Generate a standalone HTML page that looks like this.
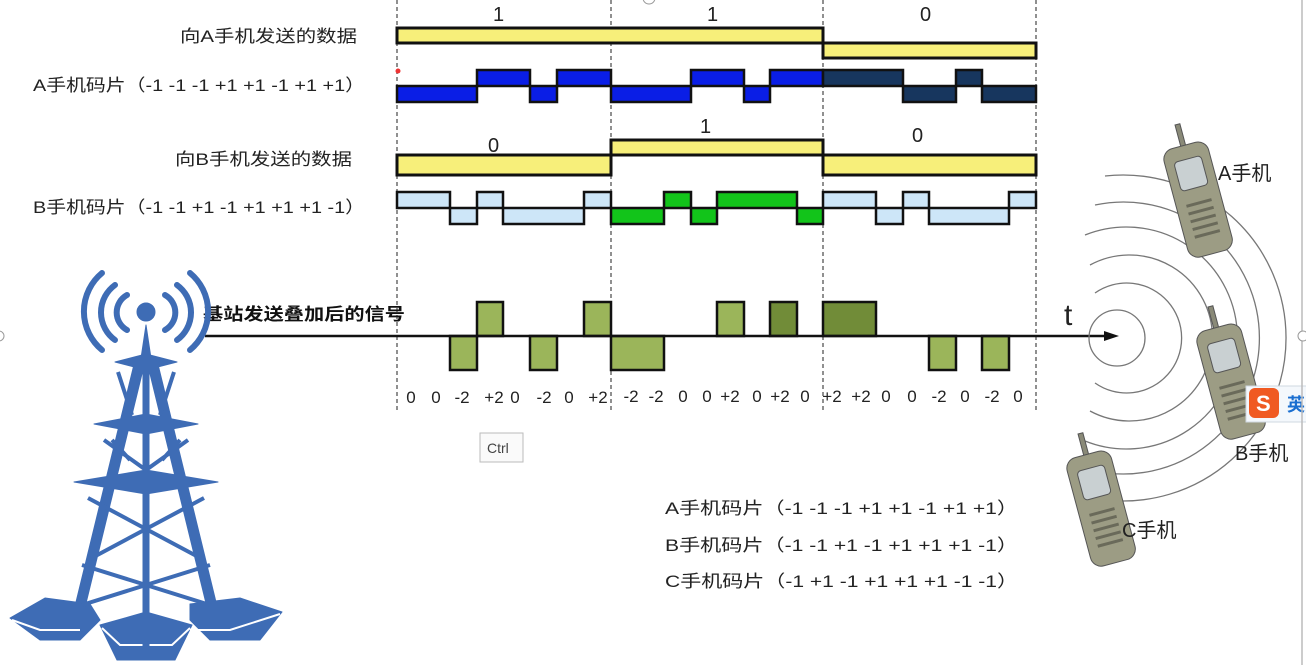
<!DOCTYPE html>
<html><head><meta charset="utf-8"><style>
html,body{margin:0;padding:0;background:#fff;}
svg{display:block}
text{font-family:"Liberation Sans","Noto Sans CJK SC",sans-serif;fill:#222;}
</style></head><body>
<svg width="1306" height="665" viewBox="0 0 1306 665" xmlns="http://www.w3.org/2000/svg">
<g stroke="#555" stroke-width="1.3" stroke-dasharray="4,3">
<line x1="397" y1="0" x2="397" y2="410"/>
<line x1="611" y1="0" x2="611" y2="410"/>
<line x1="823" y1="0" x2="823" y2="410"/>
<line x1="1036" y1="0" x2="1036" y2="410"/>
</g>
<g font-size="17">
<text x="180" y="42" textLength="177" lengthAdjust="spacingAndGlyphs">向A手机发送的数据</text>
<text x="33" y="91" textLength="332" lengthAdjust="spacingAndGlyphs">A手机码片（-1 -1 -1 +1 +1 -1 +1 +1）</text>
<text x="175" y="165" textLength="177" lengthAdjust="spacingAndGlyphs">向B手机发送的数据</text>
<text x="33" y="213" textLength="332" lengthAdjust="spacingAndGlyphs">B手机码片（-1 -1 +1 -1 +1 +1 +1 -1）</text>
</g>
<text x="203" y="320" font-size="17" font-weight="bold" textLength="202" lengthAdjust="spacingAndGlyphs" style="fill:#111">基站发送叠加后的信号</text>
<circle cx="398" cy="71" r="2.5" fill="#e33"/>
<g stroke="#111" stroke-width="3" fill="#f7ef7a">
<rect x="397" y="28" width="426" height="15"/>
<rect x="823" y="43" width="213" height="15"/>
</g>
<g font-size="20"><text x="493" y="21">1</text><text x="707" y="21">1</text><text x="920" y="21">0</text></g>
<g stroke="#111" stroke-width="2.5">
<g fill="#0a1ee6">
<rect x="397" y="86" width="80" height="16"/><rect x="477" y="70" width="53" height="16"/><rect x="530" y="86" width="27" height="16"/><rect x="557" y="70" width="54" height="16"/>
<rect x="611" y="86" width="80" height="16"/><rect x="691" y="70" width="53" height="16"/><rect x="744" y="86" width="26" height="16"/><rect x="770" y="70" width="53" height="16"/>
</g>
<g fill="#17365e">
<rect x="823" y="70" width="80" height="16"/><rect x="903" y="86" width="53" height="16"/><rect x="956" y="70" width="26" height="16"/><rect x="982" y="86" width="54" height="16"/>
</g>
</g>
<g stroke="#111" stroke-width="3" fill="#f7ef7a">
<rect x="397" y="155" width="214" height="20"/>
<rect x="611" y="140" width="212" height="15"/>
<rect x="823" y="155" width="213" height="20"/>
</g>
<g font-size="20"><text x="488" y="152">0</text><text x="700" y="133">1</text><text x="912" y="142">0</text></g>
<g stroke="#111" stroke-width="2.5">
<g fill="#cde6f8">
<rect x="397" y="192" width="53" height="16"/><rect x="450" y="208" width="27" height="16"/><rect x="477" y="192" width="26" height="16"/><rect x="503" y="208" width="81" height="16"/><rect x="584" y="192" width="27" height="16"/>
<rect x="823" y="192" width="53" height="16"/><rect x="876" y="208" width="27" height="16"/><rect x="903" y="192" width="26" height="16"/><rect x="929" y="208" width="80" height="16"/><rect x="1009" y="192" width="27" height="16"/>
</g>
<g fill="#12c41a">
<rect x="611" y="208" width="53" height="16"/><rect x="664" y="192" width="27" height="16"/><rect x="691" y="208" width="26" height="16"/><rect x="717" y="192" width="80" height="16"/><rect x="797" y="208" width="26" height="16"/>
</g>
</g>
<g stroke="#111" stroke-width="2.5" fill="#9bb55a">
<rect x="450" y="336" width="27" height="34"/><rect x="477" y="302" width="26" height="34"/><rect x="530" y="336" width="27" height="34"/><rect x="584" y="302" width="27" height="34"/>
<rect x="611" y="336" width="53" height="34"/><rect x="717" y="302" width="27" height="34"/><rect x="770" y="302" width="27" height="34" fill="#718c38"/>
<rect x="823" y="302" width="53" height="34" fill="#718c38"/><rect x="929" y="336" width="27" height="34"/><rect x="982" y="336" width="27" height="34"/>
</g>
<line x1="205" y1="336" x2="1108" y2="336" stroke="#111" stroke-width="2.5"/>
<polygon points="1119,336 1104,331 1104,341" fill="#111"/>
<text x="1064" y="325" font-size="30">t</text>
<g font-size="17" text-anchor="middle">
<text x="411" y="403">0</text><text x="436" y="403">0</text><text x="462" y="403">-2</text><text x="494" y="403">+2</text><text x="515" y="403">0</text><text x="544" y="403">-2</text><text x="569" y="403">0</text><text x="598" y="403">+2</text>
<text x="631" y="402">-2</text><text x="656" y="402">-2</text><text x="683" y="402">0</text><text x="707" y="402">0</text><text x="730" y="402">+2</text><text x="757" y="402">0</text><text x="780" y="402">+2</text><text x="805" y="402">0</text>
<text x="832" y="402">+2</text><text x="861" y="402">+2</text><text x="886" y="402">0</text><text x="912" y="402">0</text><text x="939" y="402">-2</text><text x="965" y="402">0</text><text x="992" y="402">-2</text><text x="1018" y="402">0</text>
</g>
<rect x="480" y="433" width="43" height="29" fill="#fafafa" stroke="#bbb"/>
<text x="487" y="453" font-size="14" style="fill:#444">Ctrl</text>
<g font-size="17">
<text x="665" y="514" textLength="353" lengthAdjust="spacingAndGlyphs">A手机码片（-1 -1 -1 +1 +1 -1 +1 +1）</text>
<text x="665" y="551" textLength="353" lengthAdjust="spacingAndGlyphs">B手机码片（-1 -1 +1 -1 +1 +1 +1 -1）</text>
<text x="665" y="587" textLength="353" lengthAdjust="spacingAndGlyphs">C手机码片（-1 +1 -1 +1 +1 +1 -1 -1）</text>
</g>
<g fill="none" stroke="#777" stroke-width="1.3">
<circle cx="1117" cy="338" r="28"/>
<path d="M1095,293 A55,55 0 1 1 1095,383"/>
<path d="M1090,265 A83,83 0 1 1 1090,411"/>
<path d="M1085,235 A111,111 0 1 1 1085,441"/>
<path d="M1095,205 A136,136 0 1 1 1095,471"/>
<path d="M1105,176 A163,163 0 1 1 1105,500"/>
</g>
<g transform="translate(1195,188) rotate(-15)">
<rect x="-3" y="-66" width="5" height="26" fill="#8a8a78" stroke="#555"/>
<rect x="-23" y="-44" width="46" height="112" rx="11" fill="#9c9c84" stroke="#555"/>
<rect x="-14" y="-30" width="28" height="30" rx="4" fill="#c9d0d2" stroke="#555"/>
<g fill="#6a6a5a"><rect x="-13" y="14" width="26" height="3"/><rect x="-13" y="22" width="26" height="3"/><rect x="-13" y="30" width="26" height="3"/><rect x="-13" y="38" width="26" height="3"/><rect x="-13" y="46" width="26" height="3"/></g>
</g>
<g transform="translate(1228,370) rotate(-15)">
<rect x="-3" y="-66" width="5" height="26" fill="#8a8a78" stroke="#555"/>
<rect x="-23" y="-44" width="46" height="112" rx="11" fill="#9c9c84" stroke="#555"/>
<rect x="-14" y="-30" width="28" height="30" rx="4" fill="#c9d0d2" stroke="#555"/>
<g fill="#6a6a5a"><rect x="-13" y="14" width="26" height="3"/><rect x="-13" y="22" width="26" height="3"/><rect x="-13" y="30" width="26" height="3"/><rect x="-13" y="38" width="26" height="3"/><rect x="-13" y="46" width="26" height="3"/></g>
</g>
<g transform="translate(1098,497) rotate(-15)">
<rect x="-3" y="-66" width="5" height="26" fill="#8a8a78" stroke="#555"/>
<rect x="-23" y="-44" width="46" height="112" rx="11" fill="#9c9c84" stroke="#555"/>
<rect x="-14" y="-30" width="28" height="30" rx="4" fill="#c9d0d2" stroke="#555"/>
<g fill="#6a6a5a"><rect x="-13" y="14" width="26" height="3"/><rect x="-13" y="22" width="26" height="3"/><rect x="-13" y="30" width="26" height="3"/><rect x="-13" y="38" width="26" height="3"/><rect x="-13" y="46" width="26" height="3"/></g>
</g>
<g font-size="20">
<text x="1218" y="180">A手机</text>
<text x="1235" y="460">B手机</text>
<text x="1122" y="537">C手机</text>
</g>
<rect x="1246" y="386" width="62" height="36" fill="#f4f8fc" stroke="#cfd8e0"/>
<rect x="1249" y="388" width="30" height="30" rx="6" fill="#f05a22"/>
<text x="1256" y="411" font-size="22" font-weight="bold" style="fill:#fff">S</text>
<text x="1287" y="411" font-size="18" font-weight="bold" style="fill:#1b6fd0">英</text>
<line x1="1302" y1="0" x2="1302" y2="665" stroke="#bbb" stroke-width="1.5"/>
<circle cx="649" cy="-2" r="6" fill="#fff" stroke="#999"/>
<circle cx="1303" cy="336" r="5" fill="#fff" stroke="#999"/>
<circle cx="-1" cy="336" r="5" fill="#fff" stroke="#999"/>
<g fill="none" stroke="#3e6cb5" stroke-width="6" stroke-linecap="round">
<path d="M127,295 A20,20 0 0 0 127,330"/><path d="M165,295 A20,20 0 0 1 165,330"/>
<path d="M115,285 A34,34 0 0 0 115,340"/><path d="M177,285 A34,34 0 0 1 177,340"/>
<path d="M102,273 A50,50 0 0 0 102,350"/><path d="M190,273 A50,50 0 0 1 190,350"/>
</g>
<g fill="#3e6cb5" stroke="#3e6cb5" stroke-linejoin="round">
<circle cx="146" cy="312" r="9"/>
<polygon points="146,325 152,365 140,365"/>
<polygon points="115,362 146,354 177,362 146,370"/>
<polygon points="94,424 146,414 198,424 146,434"/>
<polygon points="74,482 146,470 218,482 146,494"/>
<polygon points="10,618 45,598 90,604 100,620 80,640 40,640"/>
<polygon points="190,604 240,598 282,612 260,640 210,640 190,620"/>
<polygon points="100,625 146,612 192,625 175,660 117,660"/>
</g>
<g stroke="#fff" stroke-width="2" fill="none">
<path d="M12,620 L40,630 L80,630 M190,630 L230,630 L280,614 M102,628 L120,645 L172,645 L190,628"/>
</g>
<g stroke="#3e6cb5" stroke-width="11" stroke-linecap="round" fill="none">
<path d="M139,365 L78,615"/><path d="M153,365 L214,615"/>
</g>
<line x1="146" y1="360" x2="146" y2="655" stroke="#3e6cb5" stroke-width="7"/>
<g stroke="#3e6cb5" stroke-width="4" fill="none">
<path d="M88,498 L204,560 M204,498 L88,560 M82,565 L210,605 M210,565 L82,605"/>
<path d="M104,440 L146,470 L188,440 M112,440 L130,460 M180,440 L162,460"/>
<path d="M118,372 L132,415 M174,372 L160,415"/>
</g>
</svg>
</body></html>
